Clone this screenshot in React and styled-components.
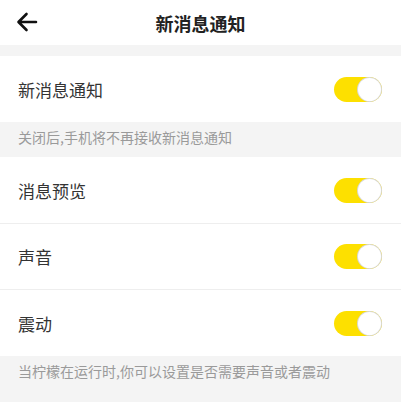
import React, { useState } from "react";
import styled, { createGlobalStyle } from "styled-components";

const Global = createGlobalStyle`
  html, body { margin: 0; padding: 0; background: #f4f4f4; }
  body { font-family: "Noto Sans CJK SC", "Noto Sans", sans-serif; }
`;

const Page = styled.div`
  width: 401px;
  height: 402px;
  background: #f4f4f4;
  display: flex;
  flex-direction: column;
  overflow: hidden;
`;

const Header = styled.header`
  height: 45px;
  background: #fff;
  display: flex;
  align-items: center;
  justify-content: center;
  position: relative;
  flex-shrink: 0;
`;

const Back = styled.button`
  position: absolute;
  left: 15px;
  top: 10px;
  width: 24px;
  height: 24px;
  border: 0;
  padding: 0;
  background: none;
  display: flex;
  align-items: center;
  justify-content: center;
`;

const Title = styled.h1`
  margin: 0;
  font-size: 18px;
  font-weight: 700;
  color: #222;
  line-height: 24px;
`;

const Gap = styled.div`
  height: 11px;
  flex-shrink: 0;
`;

const Group = styled.div`
  background: #fff;
  display: flex;
  flex-direction: column;
`;

const Row = styled.div`
  height: ${(p) => p.$h}px;
  display: flex;
  align-items: center;
  justify-content: space-between;
  padding: 0 19px 0 18px;
  border-top: ${(p) => (p.$divider ? "1px solid #eeeeee" : "none")};
  box-sizing: border-box;
`;

const Label = styled.span`
  font-size: 17px;
  color: #333;
`;

const Note = styled.div`
  padding: ${(p) => p.$pad};
  font-size: 14px;
  line-height: 20px;
  color: #9a9a9a;
  letter-spacing: ${(p) => p.$ls || 0}px;
`;

const Track = styled.button`
  width: 48px;
  height: 25px;
  border-radius: 13px;
  border: 0;
  padding: 1px;
  background: ${(p) => (p.$on ? "#fde000" : "#e5e5e5")};
  display: flex;
  justify-content: ${(p) => (p.$on ? "flex-end" : "flex-start")};
  align-items: center;
  box-sizing: border-box;
  cursor: pointer;
`;

const Knob = styled.span`
  width: 23px;
  height: 23px;
  border-radius: 50%;
  background: #fff;
  box-shadow: 0 0 0 1px #d8d8d8;
`;

function Toggle({ on, onClick }) {
  return (
    <Track $on={on} onClick={onClick} aria-pressed={on}>
      <Knob />
    </Track>
  );
}

export default function App() {
  const [s, setS] = useState({ a: true, b: true, c: true, d: true });
  const flip = (k) => () => setS((o) => ({ ...o, [k]: !o[k] }));
  return (
    <Page>
      <Global />
      <Header>
        <Back aria-label="back">
          <svg width="22" height="20" viewBox="0 0 22 20" fill="none">
            <path d="M20 10H3M10.5 2L2.5 10L10.5 18" stroke="#111" strokeWidth="2.6" strokeLinecap="round" strokeLinejoin="round" />
          </svg>
        </Back>
        <Title>新消息通知</Title>
      </Header>
      <Gap />
      <Group>
        <Row $h={66}>
          <Label>新消息通知</Label>
          <Toggle on={s.a} onClick={flip("a")} />
        </Row>
      </Group>
      <Note $pad="5px 18px 10px">关闭后,手机将不再接收新消息通知</Note>
      <Group>
        <Row $h={66}>
          <Label>消息预览</Label>
          <Toggle on={s.b} onClick={flip("b")} />
        </Row>
        <Row $h={66} $divider>
          <Label>声音</Label>
          <Toggle on={s.c} onClick={flip("c")} />
        </Row>
        <Row $h={67} $divider>
          <Label>震动</Label>
          <Toggle on={s.d} onClick={flip("d")} />
        </Row>
      </Group>
      <Note $pad="5px 18px">当柠檬在运行时,你可以设置是否需要声音或者震动</Note>
    </Page>
  );
}
